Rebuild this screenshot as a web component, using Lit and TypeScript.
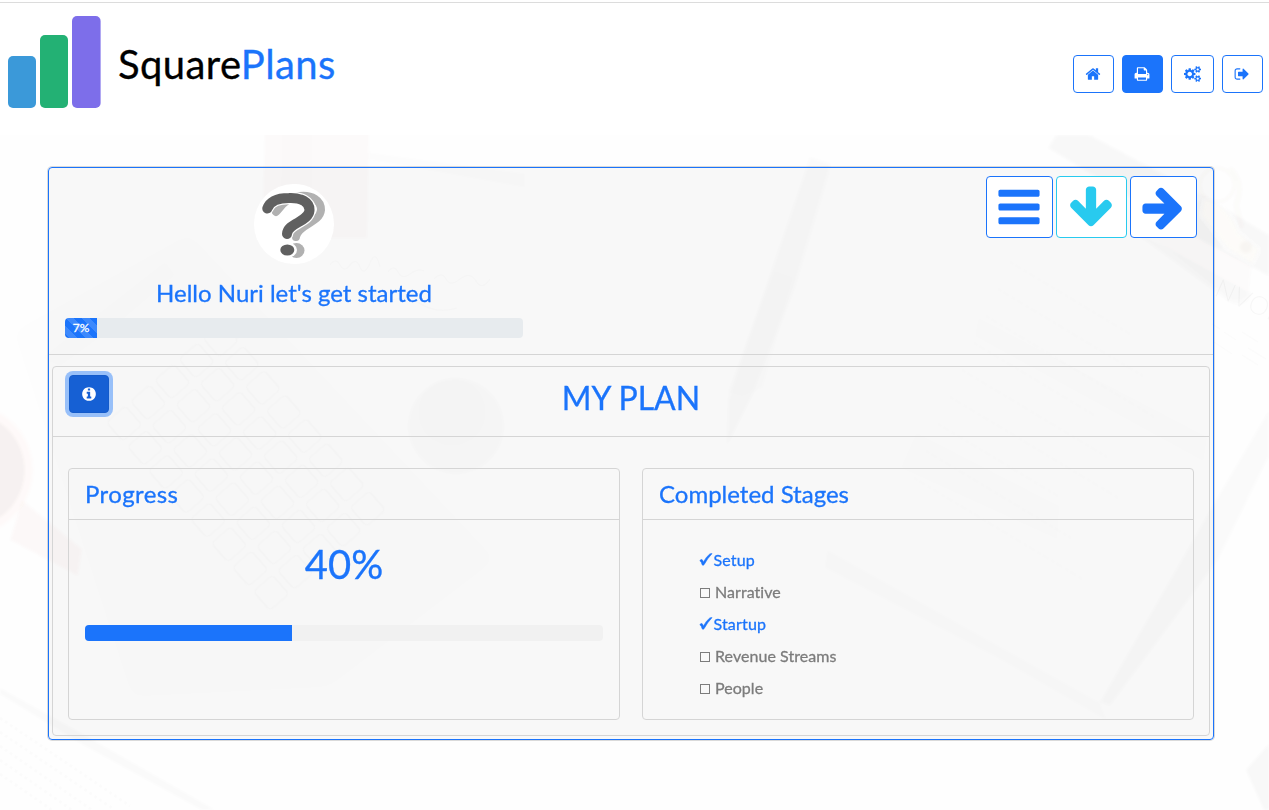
import { LitElement, html, css, svg } from "lit";
import { customElement, property } from "lit/decorators.js";

const ICONS: Record<string, string> = {
  home: "M1472 992v480q0 26-19 45t-45 19h-384v-384h-256v384h-384q-26 0-45-19t-19-45v-480q0-1 .5-3t.5-3l575-474 575 474q1 2 1 6zm223-69l-62 74q-8 9-21 11h-3q-13 0-21-7l-692-577-692 577q-12 8-24 7-13-2-21-11l-62-74q-8-10-7-23.5t11-21.5l719-599q32-26 76-26t76 26l244 204v-195q0-14 9-23t23-9h192q14 0 23 9t9 23v408l219 182q10 8 11 21.5t-7 23.5z",
  print: "M448 1536h896v-256h-896v256zm0-640h896v-384h-160q-40 0-68-28t-28-68v-160h-640v640zm1152 64q0-26-19-45t-45-19-45 19-19 45 19 45 45 19 45-19 19-45zm128 0v416q0 13-9.5 22.5t-22.5 9.5h-224v160q0 40-28 68t-68 28h-960q-40 0-68-28t-28-68v-160h-224q-13 0-22.5-9.5t-9.5-22.5v-416q0-79 56.5-135.5t135.5-56.5h64v-544q0-40 28-68t68-28h672q40 0 88 20t76 48l152 152q28 28 48 76t20 88v256h64q79 0 135.5 56.5t56.5 135.5z",
  cogs: "M896 896q0-106-75-181t-181-75-181 75-75 181 75 181 181 75 181-75 75-181zm768 512q0-52-38-90t-90-38-90 38-38 90q0 53 37.5 90.5t90.5 37.5 90.5-37.5 37.5-90.5zm0-1024q0-52-38-90t-90-38-90 38-38 90q0 53 37.5 90.5t90.5 37.5 90.5-37.5 37.5-90.5zm-384 421v185q0 10-7 19.5t-16 10.5l-155 24q-11 35-32 76 34 48 90 115 7 11 7 20 0 12-7 19-23 30-82.5 89.5t-78.5 59.5q-11 0-21-7l-115-90q-37 19-77 31-11 108-23 155-7 24-30 24h-186q-11 0-20-7.5t-10-17.5l-23-153q-34-10-75-31l-118 89q-7 7-20 7-11 0-21-8-144-133-144-160 0-9 7-19 10-14 41-53t47-61q-23-44-35-82l-152-24q-10-1-17-9.5t-7-19.5v-185q0-10 7-19.5t16-10.5l155-24q11-35 32-76-34-48-90-115-7-11-7-20 0-12 7-20 22-30 82-89t79-59q11 0 21 7l115 90q34-18 77-32 11-108 23-154 7-24 30-24h186q11 0 20 7.5t10 17.5l23 153q34 10 75 31l118-89q8-7 20-7 11 0 21 8 144 133 144 160 0 8-7 19-12 16-42 54t-45 60q23 48 34 82l152 23q10 2 17 10.5t7 19.5zm640 533v140q0 16-149 31-12 27-30 52 51 113 51 138 0 4-4 7-122 71-124 71-8 0-46-47t-52-68q-20 2-30 2t-30-2q-14 21-52 68t-46 47q-2 0-124-71-4-3-4-7 0-25 51-138-18-25-30-52-149-15-149-31v-140q0-16 149-31 13-29 30-52-51-113-51-138 0-4 4-7 4-2 35-20t59-34 30-16q8 0 46 46.5t52 67.5q20-2 30-2t30 2q51-71 92-112l6-2q4 0 124 70 4 3 4 7 0 25-51 138 17 23 30 52 149 15 149 31zm0-1024v140q0 16-149 31-12 27-30 52 51 113 51 138 0 4-4 7-122 71-124 71-8 0-46-47t-52-68q-20 2-30 2t-30-2q-14 21-52 68t-46 47q-2 0-124-71-4-3-4-7 0-25 51-138-18-25-30-52-149-15-149-31v-140q0-16 149-31 13-29 30-52-51-113-51-138 0-4 4-7 4-2 35-20t59-34 30-16q8 0 46 46.5t52 67.5q20-2 30-2t30 2q51-71 92-112l6-2q4 0 124 70 4 3 4 7 0 25-51 138 17 23 30 52 149 15 149 31z",
  exit: "M704 1440q0 4 1 20t.5 26.5-3 23.5-10 19.5-20.5 6.5h-320q-119 0-203.5-84.5t-84.5-203.5v-704q0-119 84.5-203.5t203.5-84.5h320q13 0 22.5 9.5t9.5 22.5q0 4 1 20t.5 26.5-3 23.5-10 19.5-20.5 6.5h-320q-66 0-113 47t-47 113v704q0 66 47 113t113 47h312l11.5 1 11.5 3 8 5.5 7 9 2 13.5zm928-544q0 26-19 45l-544 544q-19 19-45 19t-45-19-19-45v-288h-448q-26 0-45-19t-19-45v-384q0-26 19-45t45-19h448v-288q0-26 19-45t45-19 45 19l544 544q19 19 19 45z",
  info: "M1152 1376v-160q0-14-9-23t-23-9h-96v-512q0-14-9-23t-23-9h-320q-14 0-23 9t-9 23v160q0 14 9 23t23 9h96v320h-96q-14 0-23 9t-9 23v160q0 14 9 23t23 9h448q14 0 23-9t9-23zm-128-896v-160q0-14-9-23t-23-9h-192q-14 0-23 9t-9 23v160q0 14 9 23t23 9h192q14 0 23-9t9-23zm640 416q0 209-103 385.5t-279.5 279.5-385.5 103-385.5-103-279.5-279.5-103-385.5 103-385.5 279.5-279.5 385.5-103 385.5 103 279.5 279.5 103 385.5z",
  bars: "M1664 1344v128q0 26-19 45t-45 19h-1408q-26 0-45-19t-19-45v-128q0-26 19-45t45-19h1408q26 0 45 19t19 45zm0-512v128q0 26-19 45t-45 19h-1408q-26 0-45-19t-19-45v-128q0-26 19-45t45-19h1408q26 0 45 19t19 45zm0-512v128q0 26-19 45t-45 19h-1408q-26 0-45-19t-19-45v-128q0-26 19-45t45-19h1408q26 0 45 19t19 45z",
  down: "M1675 832q0 53-37 90l-651 652q-39 37-91 37-53 0-90-37l-651-652q-38-36-38-90 0-53 38-91l74-75q39-37 91-37 53 0 90 37l294 294v-704q0-52 38-90t90-38h128q52 0 90 38t38 90v704l294-294q37-37 90-37 52 0 91 37l75 75q37 39 37 91z",
  right: "M1600 960q0 54-37 91l-651 651q-39 37-91 37-51 0-90-37l-75-75q-38-38-38-91t38-91l293-293h-704q-52 0-84.5-37.5t-32.5-90.5v-128q0-53 32.5-90.5t84.5-37.5h704l-293-294q-38-36-38-90t38-90l75-75q38-38 90-38 53 0 91 38l651 651q37 35 37 90z",
};

@customElement("fa-icon")
class FaIcon extends LitElement {
  @property() name = "home";
  static styles = css`
    :host { display: block; line-height: 0; }
    .glyph { height: 1em; width: auto; display: block; fill: currentColor; }
  `;
  render() {
    const w = this.name === "cogs" ? 1920 : 1792;
    return html`<svg class="glyph" viewBox="0 0 ${w} 1792"><path d=${ICONS[this.name]} /></svg>`;
  }
}

@customElement("desk-backdrop")
class DeskBackdrop extends LitElement {
  static styles = css`
    :host { display: block; }
    .scene { display: block; width: 100%; height: 100%; opacity: .7; }
    .sheet-title { font: 300 26px Lato, sans-serif; -webkit-text-stroke: 0; }
  `;
  render() {
    const keys = [];
    for (let r = 0; r < 5; r++) {
      for (let c = 0; c < 8; c++) {
        keys.push(svg`<rect x=${c * 32} y=${r * 32} width="25" height="25" rx="4" />`);
      }
    }
    const rows = [];
    for (let i = 0; i < 9; i++) {
      rows.push(svg`<path d="M${1010 - i * 12} ${262 + i * 27}l${120 + (i % 3) * 25} ${72 + (i % 3) * 15}" />`);
    }
    return html`<svg class="scene" viewBox="0 135 1269 675" preserveAspectRatio="none">
      <defs>
        <filter id="soft" x="-10%" y="-10%" width="120%" height="120%"><feGaussianBlur stdDeviation="1.5" /></filter>
        <filter id="haze" x="-20%" y="-20%" width="140%" height="140%"><feGaussianBlur stdDeviation="8" /></filter>
      </defs>
      <path filter="url(#haze)" fill="#000" opacity=".006" d="M10 330L190 230L500 560L330 690L130 700Z" />
      <g filter="url(#soft)">
        <path fill="#a04030" opacity=".026" d="M265 130H369L367 238H262Z" />
        <path fill="#001030" opacity=".008" d="M282 130H312V225H280Z" />
        <path fill="#000" opacity=".01" d="M369 152L525 173V188L369 160Z" />
        <path fill="#403000" opacity=".01" d="M42 358L165 262L175 275L110 330L60 366Z" />
        <circle cx="-33" cy="470" r="66" fill="#ff9070" opacity=".05" />
        <circle cx="-33" cy="470" r="58" fill="#000" opacity=".045" />
        <path fill="#a03820" opacity=".035" d="M22 500L82 549L78 576L10 540Z" />
        <circle cx="456" cy="426" r="48" fill="#000" opacity=".02" />
        <circle cx="452" cy="412" r="34" fill="#000" opacity=".008" />
        <path fill="#302000" opacity=".022" d="M810 157L831 164L794 288L752 396L727 446L728 400L764 292Z" />
        <path fill="#000" opacity=".01" d="M774 270L794 277L762 388L742 397L727 392Z" />
        <path fill="#302000" opacity=".004" d="M828 170L888 190L917 260V350L760 390Z" />
        <path fill="#201000" opacity=".036" d="M1056 135H1090L1206 197L1269 235V276L1200 240L1048 148Z" />
        <path fill="#504000" opacity=".018" d="M1140 227L1205 198L1222 250L1252 262L1249 292Q1242 304 1229 298Z" />
        <path fill="#000" opacity=".022" d="M1128 228L1150 238L1252 294Q1244 310 1229 302Z" />
        <path fill="#fcfaf6" d="M1205 200Q1228 205 1238 233L1258 250L1252 263L1228 248L1202 215Z" />
        <circle cx="1217" cy="185" r="17" fill="none" stroke="#806020" stroke-width="3" opacity=".035" />
        <path d="M1230 168Q1245 183 1236 205L1242 228" fill="none" stroke="#806020" stroke-width="5" opacity=".03" />
        <circle cx="1246" cy="247" r="6" fill="#302000" opacity=".04" />
        <path fill="#2a1800" opacity=".025" d="M1269 410V456L1218 560L1110 706L1100 702L1210 510Z" />
        <path fill="#000" opacity=".012" d="M827 549L1100 702L1108 722L1000 660L824 568Z" />
        <path fill="#000" opacity=".006" d="M978 317L1208 437L1204 462L974 336ZM916 432L1060 506L1058 540L900 468Z" />
        <path fill="#402000" opacity=".026" d="M0 688L70 727L215 810H202L80 743L0 694Z" />
        <path fill="#000" opacity=".04" d="M1246 770L1269 744V810H1264Z" />
      </g>
      <g fill="none" stroke="#000" stroke-width="1.3" opacity=".018" transform="translate(222 322) rotate(49)">${keys}</g>
      <g fill="none" stroke="#000" stroke-width="3" stroke-dasharray="4 2 7 3" opacity=".007">${rows}</g>
      <g fill="none" stroke="#000" stroke-width="3" stroke-dasharray="3 3" opacity=".02">
        <path d="M0 718L130 806M0 732L112 808M0 746L92 810M0 760L72 810M0 774L52 810" />
      </g>
      <g fill="none" stroke="#000" stroke-width="1.5" opacity=".02">
        <path d="M330 265q6-8 10 0t10 0 10 2 10-4 10 4M388 272q6-8 10 0t12 2 14-3M434 279q8-8 12 0t14 0 16 2 14-2M385 302q20-8 36 2t36 4" />
        <path d="M1212 324l8 5m4 3l12 8m-22 2l18 12m10-22l16 10m-10 6l18 11m-24-4l16 10" />
      </g>
      <text class="sheet-title" transform="translate(1213 295) rotate(24)" fill="#000" opacity=".045">NVOI</text>
    </svg>`;
  }
}

const STAGES = [
  { label: "Setup", done: true },
  { label: "Narrative", done: false },
  { label: "Startup", done: true },
  { label: "Revenue Streams", done: false },
  { label: "People", done: false },
];

@customElement("app-root")
class AppRoot extends LitElement {
  @property({ type: Number }) setup = 7;
  @property({ type: Number }) plan = 40;

  static styles = css`
    :host {
      display: flex; flex-direction: column; height: 810px; overflow: hidden; background: #fff;
      font: 400 16px/1.5 Lato, sans-serif; color: #1b74fb; -webkit-text-stroke: .3px currentColor;
      --blue: #1b74fb; --line: #d5d5d5;
    }
    * { box-sizing: border-box; }
    h1, h2, h3, ul { margin: 0; padding: 0; font-weight: 400; }
    .top {
      height: 135px; flex: none; display: flex; justify-content: space-between; align-items: flex-start;
      padding: 0 6px 0 8px; background: linear-gradient(#dcdcdc, #dcdcdc) 0 2px / 100% 1px no-repeat;
    }
    .brand { display: flex; }
    .logo { display: block; margin-top: 16px; }
    .name { font-size: 40px; line-height: 48px; margin: 40px 0 0 17px; color: #000; letter-spacing: .4px; }
    .name-accent { color: var(--blue); }
    .nav { display: flex; gap: 8px; margin-top: 55px; }
    .btn {
      display: flex; align-items: center; justify-content: center; margin: 0; padding: 0 .4px 0 0; height: 38px; width: 41px;
      font-size: 16px; color: var(--blue); background: #fff; border: 1px solid var(--blue); border-radius: 4px;
    }
    .btn.wide { width: 43px; }
    .btn.solid { background: var(--blue); color: #fff; }
    .btn.big { width: 67px; height: 62px; font-size: 48px; padding: 0 .4px .6px 0; }
    .btn.big.cyan { width: 71px; color: #28caef; border-color: #28caef; }
    .btn.focus { width: 40px; background: #1660d4; border-color: #145bca; color: #fff; box-shadow: 0 0 0 4px #98c0f9; }
    .stage { position: relative; flex: 1; padding: 32px 55px 0 48px; background: #fefefe; }
    .backdrop { position: absolute; inset: 0; }
    .outer {
      position: relative; height: 573px; border: 1px solid var(--blue); border-radius: 4px;
      background: rgba(0, 0, 0, .024); box-shadow: 0 0 0 1px rgba(0, 0, 0, .14);
    }
    .intro {
      height: 187px; display: flex; justify-content: space-between; padding: 8px 16px 0;
      border-bottom: 1px solid var(--line);
    }
    .hello { width: 458px; padding-top: 8px; display: flex; flex-direction: column; align-items: center; }
    .avatar { display: block; }
    .greeting { font-size: 24px; line-height: 29px; margin: 14px 0 11px; }
    .track { width: 100%; height: 20px; border-radius: 4px; background: #e7ebee; overflow: hidden; display: flex; }
    .fill {
      font-size: 12px; line-height: 20px; text-align: center; color: #fff; background-color: var(--blue);
      background-image: linear-gradient(45deg, rgba(255,255,255,.15) 25%, transparent 25%, transparent 50%, rgba(255,255,255,.15) 50%, rgba(255,255,255,.15) 75%, transparent 75%);
      background-size: 16px 16px;
    }
    .actions { display: flex; gap: 3px; align-items: flex-start; }
    .inner { margin: 11px 3px 0; height: 370px; border: 1px solid var(--line); border-radius: 4px; }
    .title-row {
      height: 70px; display: grid; grid-template-columns: 40px 1fr 40px; padding: 8px 16px 0;
      border-bottom: 1px solid var(--line);
    }
    .title { font-size: 32px; line-height: 38px; text-align: center; margin-top: 4px; }
    .cards { display: grid; grid-template-columns: 1fr 1fr; gap: 22px; padding: 31px 15px 0; }
    .card { height: 252px; border: 1px solid var(--line); border-radius: 4px; }
    .card-head { height: 51px; padding: 10px 16px; border-bottom: 1px solid var(--line); font-size: 24px; line-height: 29px; }
    .card-head.loose { letter-spacing: .4px; }
    .card-body { padding: 20px 16px 0; }
    .percent { font-size: 40px; line-height: 48px; text-align: center; }
    .track.thin { margin-top: 37px; height: 16px; background: #f1f1f1; }
    .fill.plain { background-image: none; }
    .stages { list-style: none; padding: 4px 0 0 40px; letter-spacing: .05px; }
    .stage-item { height: 32px; display: flex; align-items: center; color: #7c7c7c; }
    .stage-item.done { color: var(--blue); letter-spacing: .2px; }
    .mark { width: 16px; height: 16px; flex: none; }
    .stage-item.done .mark { width: 14px; margin-right: .4px; }
  `;

  render() {
    return html`
      <header class="top">
        <div class="brand">
          <svg class="logo" width="93" height="92" viewBox="0 0 93 92">
            <rect x="0" y="40" width="28" height="52" rx="5" fill="#3b99d9" />
            <rect x="32" y="19" width="28" height="73" rx="5" fill="#23b174" />
            <rect x="64" y="0" width="28.6" height="92" rx="5" fill="#7d6eea" />
          </svg>
          <h1 class="name">Square<span class="name-accent">Plans</span></h1>
        </div>
        <nav class="nav">
          <button class="btn"><fa-icon name="home"></fa-icon></button>
          <button class="btn solid"><fa-icon name="print"></fa-icon></button>
          <button class="btn wide"><fa-icon name="cogs"></fa-icon></button>
          <button class="btn"><fa-icon name="exit"></fa-icon></button>
        </nav>
      </header>
      <main class="stage">
        <desk-backdrop class="backdrop"></desk-backdrop>
        <section class="outer">
          <div class="intro">
            <div class="hello">
              <svg class="avatar" width="80" height="80" viewBox="0 0 80 80">
                <circle cx="40" cy="40" r="40" fill="#fff" />
                <g fill="none" stroke="#b1b1b1" stroke-linecap="round">
                  <path stroke-width="8" d="M22 28C28 22 30 15 46 12C58 11 67 16 67 26C66 39 43 41 42 53" />
                  <ellipse cx="42.500" cy="66.500" rx="8" ry="7.500" fill="#b1b1b1" stroke="none" />
                </g>
                <g fill="none" stroke="#fff" stroke-linecap="round">
                  <path stroke-width="12.500" d="M13.300 24.500C16 17 24 14 35 14C47 13.500 56 18 55.500 26.500C54.500 38 33.500 39 33 50" />
                  <ellipse cx="34" cy="66" rx="9" ry="7.500" fill="#fff" stroke="none" />
                </g>
                <g fill="none" stroke="#606060" stroke-linecap="round">
                  <path stroke-width="10" d="M13.300 24.500C16 17 24 14 35 14C47 13.500 56 18 55.500 26.500C54.500 38 33.500 39 33 50" />
                  <ellipse cx="33.300" cy="66" rx="7" ry="5.500" fill="#606060" stroke="none" />
                </g>
              </svg>
              <h3 class="greeting">Hello Nuri let's get started</h3>
              <div class="track"><div class="fill" style="width:${this.setup}%">${this.setup}%</div></div>
            </div>
            <div class="actions">
              <button class="btn big"><fa-icon name="bars"></fa-icon></button>
              <button class="btn big cyan"><fa-icon name="down"></fa-icon></button>
              <button class="btn big"><fa-icon name="right"></fa-icon></button>
            </div>
          </div>
          <div class="inner">
            <div class="title-row">
              <button class="btn focus"><fa-icon name="info"></fa-icon></button>
              <h2 class="title">MY PLAN</h2>
            </div>
            <div class="cards">
              <article class="card">
                <h3 class="card-head loose">Progress</h3>
                <div class="card-body">
                  <div class="percent">${this.plan}%</div>
                  <div class="track thin"><div class="fill plain" style="width:${this.plan}%"></div></div>
                </div>
              </article>
              <article class="card">
                <h3 class="card-head">Completed Stages</h3>
                <div class="card-body">
                  <ul class="stages">
                    ${STAGES.map((s) => html`<li class="stage-item ${s.done ? "done" : ""}">
                      ${s.done
                        ? html`<svg class="mark" viewBox="0 0 14 16"><path fill="currentColor" stroke="currentColor" stroke-width=".7" stroke-linejoin="round" d="M.9 8.600Q2.100 7.200 3.200 7.800Q3.900 8.500 4.300 10.300Q7.300 4.500 10.900 1.900L13 1.600Q8.300 6.600 5 12.700Q3.900 13.600 3.300 12.900Q2.500 9.800.9 8.600Z" /></svg>`
                        : html`<svg class="mark" viewBox="0 0 16 16"><rect x="1.500" y="4.500" width="9" height="9" fill="none" stroke="currentColor" /></svg>`}
                      <span>${s.label}</span></li>`)}
                  </ul>
                </div>
              </article>
            </div>
          </div>
        </section>
      </main>`;
  }
}
